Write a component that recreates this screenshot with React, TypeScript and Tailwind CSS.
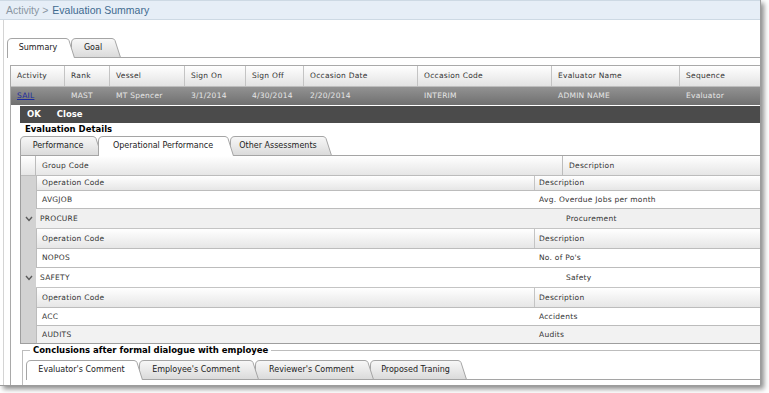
import React, { useId } from 'react';

const GF = "font-['DejaVu_Sans',Verdana,sans-serif]";

type TabDef = { label: string; w: number };

function Tab({ label, w, active, z, first }: { label: string; w: number; active: boolean; z: number; first: boolean }) {
  const raw = useId();
  const id = 'g' + raw.replace(/[^a-zA-Z0-9]/g, '');
  const hb = active ? 20 : 19.5;
  const d = `M0.5,${hb} L0.5,5 Q0.5,0.5 5,0.5 L${w - 9},0.5 Q${w - 7},0.5 ${w - 6},2.5 L${w - 0.5},${hb}`;
  return (
    <div className="relative h-[20px] shrink-0" style={{ width: w, zIndex: z, marginLeft: first ? 0 : -4 }}>
      <svg className="absolute left-0 top-0" width={w} height={20}>
        <defs>
          <linearGradient id={id} x1="0" y1="0" x2="0" y2="1">
            <stop offset="0" stopColor="#f8f8f8" />
            <stop offset="1" stopColor="#dadada" />
          </linearGradient>
        </defs>
        <path d={active ? d : d + ' Z'} fill={active ? '#ffffff' : `url(#${id})`} stroke="#a5a5a5" strokeWidth="1" />
      </svg>
      <span className={`relative flex h-[19px] items-center justify-center pr-[6px] text-[8px] leading-none tracking-normal text-[#222] ${GF}`}>
        {label}
      </span>
    </div>
  );
}

function TabStrip({ tabs, active, className }: { tabs: TabDef[]; active: number; className: string }) {
  return (
    <div className={`flex h-[20px] items-start border-b border-[#a5a5a5] ${className}`}>
      {tabs.map((t, i) => (
        <Tab key={t.label} label={t.label} w={t.w} active={i === active} z={i === active ? 50 : tabs.length - i} first={i === 0} />
      ))}
    </div>
  );
}

const topCols = [
  { h: 'Activity', cls: 'w-[54px]' },
  { h: 'Rank', cls: 'w-[45px]' },
  { h: 'Vessel', cls: 'w-[75px]' },
  { h: 'Sign On', cls: 'w-[61px]' },
  { h: 'Sign Off', cls: 'w-[58px]' },
  { h: 'Occasion Date', cls: 'w-[114px]' },
  { h: 'Occasion Code', cls: 'w-[134px]' },
  { h: 'Evaluator Name', cls: 'w-[128px]' },
  { h: 'Sequence', cls: 'flex-1' },
];
const dataVals = ['SAIL', 'MAST', 'MT Spencer', '3/1/2014', '4/30/2014', '2/20/2014', 'INTERIM', 'ADMIN NAME', 'Evaluator'];

function Chevron() {
  return (
    <svg width="8" height="6" viewBox="0 0 8 6">
      <polyline points="1,1 4,4.5 7,1" fill="none" stroke="#5a5a5a" strokeWidth="1.4" />
    </svg>
  );
}

function OpHeader({ h }: { h: string }) {
  return (
    <div className={`flex ${h}`}>
      <div className="w-[15px] shrink-0 bg-[#d2d2d2]" />
      <div className="flex flex-1 border-b border-l border-[#bcbcbc] bg-gradient-to-b from-white to-[#e6e6e6]">
        <div className="flex w-[498px] items-center border-r border-[#c4c4c4] pl-[5px]">Operation Code</div>
        <div className="flex items-center pl-[4px]">Description</div>
      </div>
    </div>
  );
}

function OpRow({ code, desc, h, bg, last }: { code: string; desc: string; h: string; bg: string; last?: boolean }) {
  return (
    <div className={`flex ${h}`}>
      <div className="w-[15px] shrink-0 bg-[#d2d2d2]" />
      <div className={`flex flex-1 border-l border-[#bcbcbc] ${last ? '' : 'border-b'} ${bg}`}>
        <div className="flex w-[498px] items-center pl-[5px]">{code}</div>
        <div className="flex items-center pl-[4px]">{desc}</div>
      </div>
    </div>
  );
}

function GroupRow({ code, desc, bg }: { code: string; desc: string; bg: string }) {
  return (
    <div className="flex h-[20px]">
      <div className="flex w-[15px] shrink-0 items-center justify-center bg-[#d2d2d2]">
        <Chevron />
      </div>
      <div className={`flex flex-1 border-b border-[#c4c4c4] ${bg}`}>
        <div className="flex w-[527px] items-center pl-[4px]">{code}</div>
        <div className="flex items-center pl-[3px]">{desc}</div>
      </div>
    </div>
  );
}

export default function App() {
  return (
    <div className="relative h-[393px] w-[769px] overflow-hidden bg-white">
      <div className="flex h-[386px] w-[761px] flex-col overflow-hidden border-b border-r border-[#9c9c9c] bg-white shadow-[3px_3px_5px_rgba(0,0,0,0.45)]">
        {/* title bar */}
        <div className="flex h-[20px] shrink-0 items-center border-b border-t border-[#cdd9e4] bg-[#e6eef7] pl-[6px] font-['Liberation_Sans',Arial,sans-serif] text-[10.5px] leading-none">
          <span className="text-[#8a96a2]">Activity &gt; </span>
          <span className="ml-[4px] text-[#3f6a8f]">Evaluation Summary</span>
        </div>

        {/* body */}
        <div className={`ml-[3px] flex flex-1 flex-col border-l border-[#d4d4d4] ${GF}`}>
          <TabStrip
            className="ml-[3px] mt-[18px]"
            active={0}
            tabs={[
              { label: 'Summary', w: 68 },
              { label: 'Goal', w: 50 },
            ]}
          />

          {/* top grid */}
          <div className="ml-[6px] mt-[7px] flex flex-col border-l border-t border-[#a9a9a9] text-[7.5px] leading-none tracking-[0.25px]">
            <div className="flex h-[21px] border-b border-[#bdbdbd] bg-gradient-to-b from-white to-[#e3e3e3] text-[#333]">
              {topCols.map((c, i) => (
                <div key={c.h} className={`flex items-center pl-[6px] ${c.cls} ${i < topCols.length - 1 ? 'border-r border-[#c4c4c4]' : ''}`}>
                  {c.h}
                </div>
              ))}
            </div>
            <div className="flex h-[18px] bg-gradient-to-b from-[#929292] to-[#707070] text-[#e6e6e6]">
              {topCols.map((c, i) => (
                <div key={c.h} className={`flex items-center pl-[6px] ${c.cls} ${i < topCols.length - 1 ? 'border-r border-transparent' : ''}`}>
                  {i === 0 ? <span className="text-[#1d2b9e] underline">{dataVals[i]}</span> : dataVals[i]}
                </div>
              ))}
            </div>
            <div className="h-[1px] bg-white" />

            {/* detail */}
            <div className="flex flex-col pl-[9px]">
              <div className="flex h-[17px] items-center bg-[#4b4b4b] pl-[7px] text-[8.5px] font-bold tracking-normal text-white">
                <span>OK</span>
                <span className="ml-[16px]">Close</span>
              </div>
              <div className="flex h-[13px] items-center pl-[5px] text-[8.5px] font-bold tracking-normal text-black">Evaluation Details</div>
              <TabStrip
                className=""
                active={1}
                tabs={[
                  { label: 'Performance', w: 82 },
                  { label: 'Operational Performance', w: 136 },
                  { label: 'Other Assessments', w: 102 },
                ]}
              />

              {/* inner grid */}
              <div className="flex flex-col border-b border-l border-[#9e9e9e] text-[#333]">
                <div className="flex h-[20px]">
                  <div className="w-[15px] shrink-0 border-b border-r border-[#bcbcbc] bg-gradient-to-b from-white to-[#e6e6e6]" />
                  <div className="flex flex-1 border-b border-[#bcbcbc] bg-gradient-to-b from-white to-[#e6e6e6]">
                    <div className="flex w-[527px] items-center border-r border-[#bcbcbc] pl-[6px]">Group Code</div>
                    <div className="flex items-center pl-[6px]">Description</div>
                  </div>
                </div>
                <OpHeader h="h-[15px]" />
                <OpRow code="AVGJOB" desc="Avg. Overdue Jobs per month" h="h-[18px]" bg="bg-white" />
                <GroupRow code="PROCURE" desc="Procurement" bg="bg-[#f0f0f0]" />
                <OpHeader h="h-[20px]" />
                <OpRow code="NOPOS" desc="No. of Po's" h="h-[19px]" bg="bg-white" />
                <GroupRow code="SAFETY" desc="Safety" bg="bg-white" />
                <OpHeader h="h-[20px]" />
                <OpRow code="ACC" desc="Accidents" h="h-[18px]" bg="bg-white" />
                <OpRow code="AUDITS" desc="Audits" h="h-[17px]" bg="bg-[#f2f2f2]" last />
              </div>

              {/* fieldset */}
              <fieldset className="-mr-[1px] ml-[2px] border border-[#bdbdbd] pl-[3px] pt-[3px] tracking-normal">
                <legend className="ml-[4px] px-[3px] text-[8.5px] font-bold leading-[13px] text-black">
                  Conclusions after formal dialogue with employee
                </legend>
                <TabStrip
                  className=""
                  active={0}
                  tabs={[
                    { label: "Evaluator's Comment", w: 117 },
                    { label: "Employee's Comment", w: 120 },
                    { label: "Reviewer's Comment", w: 119 },
                    { label: 'Proposed Traning', w: 97 },
                  ]}
                />
                <div className="h-[20px]" />
              </fieldset>
            </div>
          </div>
        </div>
      </div>
    </div>
  );
}
